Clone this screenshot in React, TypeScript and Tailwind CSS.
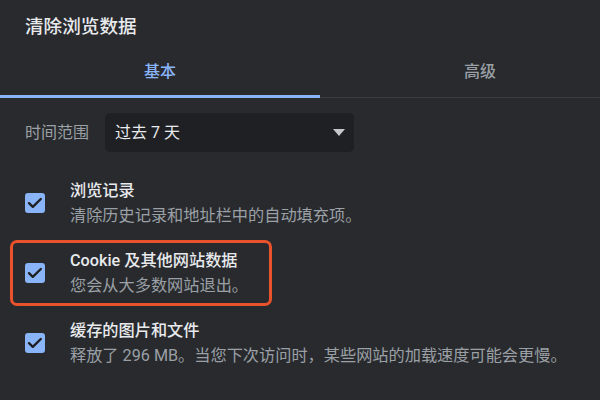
import React from "react";

type Item = { label: string; hint: string; highlight?: boolean };

const items: Item[] = [
  { label: "浏览记录", hint: "清除历史记录和地址栏中的自动填充项。" },
  { label: "Cookie 及其他网站数据", hint: "您会从大多数网站退出。", highlight: true },
  { label: "缓存的图片和文件", hint: "释放了 296 MB。当您下次访问时，某些网站的加载速度可能会更慢。" },
];

function CheckBox() {
  return (
    <span className="flex h-[20px] w-[20px] shrink-0 items-center justify-center rounded-[3px] bg-[#8ab4f8]">
      <svg width="20" height="20" viewBox="0 0 20 20" fill="none">
        <path d="M4 10.2 L7.8 13.8 L15.8 6" stroke="#1f2023" strokeWidth="2.4" strokeLinecap="round" strokeLinejoin="round" />
      </svg>
    </span>
  );
}

export default function App() {
  return (
    <div className="h-[400px] w-[600px] overflow-hidden bg-[#292a2d] font-['Roboto','Noto_Sans_CJK_SC',sans-serif]">
      <h1 className="pl-[25px] pt-[15px] text-[18.6px] font-medium leading-[24px] text-[#e8eaed]">清除浏览数据</h1>

      {/* tabs */}
      <div className="flex w-[640px] border-b border-[#3c3d41]">
        <div className="relative w-[320px] pb-[13px] pt-[21px] text-center text-[16px] font-medium leading-[24px] text-[#8ab4f8]">
          基本
          <span className="absolute bottom-[-1px] left-0 right-0 h-[3px] bg-[#8ab4f8]" />
        </div>
        <div className="w-[320px] pb-[13px] pt-[21px] text-center text-[16px] font-medium leading-[24px] text-[#9aa0a6]">
          高级
        </div>
      </div>

      <div className="mt-[15px] flex items-center gap-4 pl-[25px]">
        <span className="text-[16px] leading-[24px] text-[#9aa0a6]">时间范围</span>
        <div className="flex h-[39px] w-[249px] items-center justify-between rounded-[5px] bg-[#1f2023] pl-[10px] pr-[9px]">
          <span className="text-[16px] leading-[24px] text-[#e8eaed]">过去 7 天</span>
          <svg width="12" height="7" viewBox="0 0 12 7">
            <polygon points="0,0 12,0 6,7" fill="#c4c7cc" />
          </svg>
        </div>
      </div>

      <div className="mt-[18px] flex flex-col gap-[4px]">
        {items.map((it) => (
          <div
            key={it.label}
            className={
              it.highlight
                ? "ml-[10px] flex w-[262px] items-center gap-[25px] rounded-[7px] border-[3px] border-[#e9522a] py-[5px] pl-[12px]"
                : "ml-[10px] flex items-center gap-[25px] rounded-[7px] border-[3px] border-transparent py-[5px] pl-[12px]"
            }
          >
            <CheckBox />
            <div className="whitespace-nowrap">
              <p className="text-[16.2px] font-medium leading-[25px] text-[#e8eaed]">{it.label}</p>
              <p className="text-[16.2px] leading-[25px] text-[#9aa0a6]">{it.hint}</p>
            </div>
          </div>
        ))}
      </div>
    </div>
  );
}
